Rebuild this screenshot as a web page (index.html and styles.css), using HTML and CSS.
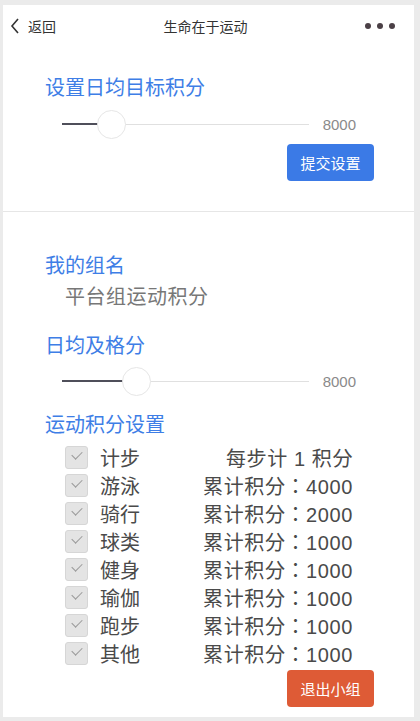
FILE: index.html
```html
<!DOCTYPE html>
<html>
	<head>
		<meta charset="UTF-8">
		<title>生命在于运动</title>
		<link rel="stylesheet" href="styles.css">
	</head>

	<body>
		<div class="page">
			<div class="topbar">
				<div class="back">
					<svg width="10" height="16" viewBox="0 0 10 16"><path d="M8 1 L2 8 L8 15" fill="none" stroke="#333" stroke-width="1.6"/></svg>
					<span>返回</span>
				</div>
				<div class="title">生命在于运动</div>
				<div class="more"><i></i><i></i><i></i></div>
			</div>

			<div class="section first">
				<h2>设置日均目标积分</h2>
				<div class="slider">
					<div class="track">
						<div class="fill" style="width: 20%"></div>
						<div class="thumb" style="left: 20%"></div>
					</div>
					<span class="value">8000</span>
				</div>
				<div class="actions">
					<button class="btn btn-blue">提交设置</button>
				</div>
			</div>

			<div class="section second">
				<h2>我的组名</h2>
				<p class="groupname">平台组运动积分</p>

				<h2 class="gap">日均及格分</h2>
				<div class="slider">
					<div class="track">
						<div class="fill" style="width: 30%"></div>
						<div class="thumb" style="left: 30%"></div>
					</div>
					<span class="value">8000</span>
				</div>

				<h2 class="gap-small">运动积分设置</h2>
				<ul class="sports">
					<li><span class="check"></span><span class="name">计步</span><span class="score">每步计 1 积分</span></li>
					<li><span class="check"></span><span class="name">游泳</span><span class="score">累计积分：4000</span></li>
					<li><span class="check"></span><span class="name">骑行</span><span class="score">累计积分：2000</span></li>
					<li><span class="check"></span><span class="name">球类</span><span class="score">累计积分：1000</span></li>
					<li><span class="check"></span><span class="name">健身</span><span class="score">累计积分：1000</span></li>
					<li><span class="check"></span><span class="name">瑜伽</span><span class="score">累计积分：1000</span></li>
					<li><span class="check"></span><span class="name">跑步</span><span class="score">累计积分：1000</span></li>
					<li><span class="check"></span><span class="name">其他</span><span class="score">累计积分：1000</span></li>
				</ul>
				<div class="actions">
					<button class="btn btn-red">退出小组</button>
				</div>
			</div>
		</div>
	</body>
</html>
```

FILE: styles.css
```css
html, body, h2, p, ul, li {
	margin: 0;
	padding: 0;
}
body {
	background: #ebebeb;
	font-family: "Liberation Sans", "Noto Sans CJK SC", sans-serif;
	color: #333;
}
.page {
	margin: 5px 6px 4px 3px;
	height: 712px;
	background: #ffffff;
}

/* top bar */
.topbar {
	height: 42px;
	display: flex;
	align-items: center;
	padding: 0 19px 0 7px;
	font-size: 14px;
}
.back {
	display: flex;
	align-items: center;
	gap: 8px;
	width: 86px;
}
.title {
	flex: 1;
	text-align: center;
}
.more {
	width: 80px;
	display: flex;
	justify-content: flex-end;
	gap: 6px;
}
.more i {
	width: 6px;
	height: 6px;
	border-radius: 50%;
	background: #4b4046;
}

/* sections */
.section {
	padding: 0 40px 0 42px;
}
.section.first {
	padding-top: 29px;
	padding-bottom: 30px;
	border-bottom: 1px solid #e6e6e6;
}
.section.second {
	padding-top: 42px;
}
h2 {
	font-size: 20px;
	font-weight: normal;
	line-height: 24px;
	color: #3e7ee6;
}
h2.gap {
	margin-top: 25px;
}
h2.gap-small {
	margin-top: 17px;
}
.groupname {
	margin-top: 7px;
	padding-left: 20px;
	font-size: 20px;
	line-height: 24px;
	letter-spacing: 0.5px;
	color: #777;
}

/* slider */
.slider {
	display: flex;
	align-items: center;
	height: 30px;
	margin-top: 9px;
	padding: 0 18px 0 17px;
	gap: 14px;
}
.section.second .slider {
	margin-top: 8px;
}
.track {
	position: relative;
	flex: 1;
	height: 1px;
	background: #e0e0e0;
}
.fill {
	position: absolute;
	left: 0;
	top: -1px;
	height: 2px;
	background: #4f4f5a;
}
.thumb {
	position: absolute;
	top: -14px;
	width: 27px;
	height: 27px;
	margin-left: -14px;
	border: 1px solid #e6e6e6;
	border-radius: 50%;
	background: #ffffff;
}
.value {
	font-size: 15px;
	color: #8a8a8a;
}

/* buttons */
.actions {
	display: flex;
	justify-content: flex-end;
	margin-top: 5px;
}
.btn {
	width: 87px;
	height: 37px;
	border: none;
	border-radius: 4px;
	font-family: "Noto Sans CJK SC", sans-serif;
	font-size: 15px;
	color: #ffffff;
}
.btn-blue {
	background: #3b7ae6;
}
.btn-red {
	background: #de5b36;
}
.sports + .actions {
	margin-top: 3px;
}

/* sport list */
.sports {
	list-style: none;
	margin-top: 6px;
	padding: 0 21px 0 20px;
}
.sports li {
	display: flex;
	align-items: center;
	height: 28px;
	font-size: 20px;
	color: #4a4a4a;
}
.check {
	position: relative;
	width: 21px;
	height: 21px;
	border: 1px solid #d6d6d6;
	border-radius: 3px;
	background: #e4e4e4;
}
.check::after {
	content: "";
	position: absolute;
	left: 6px;
	top: 4px;
	width: 9px;
	height: 5px;
	border-left: 1px solid #9a9a9a;
	border-bottom: 1px solid #9a9a9a;
	transform: rotate(-45deg);
}
.name {
	margin-left: 12px;
}
.score {
	flex: 1;
	text-align: right;
	letter-spacing: 0.6px;
	font-family: "Liberation Sans", "Noto Sans CJK JP", sans-serif;
}
```
